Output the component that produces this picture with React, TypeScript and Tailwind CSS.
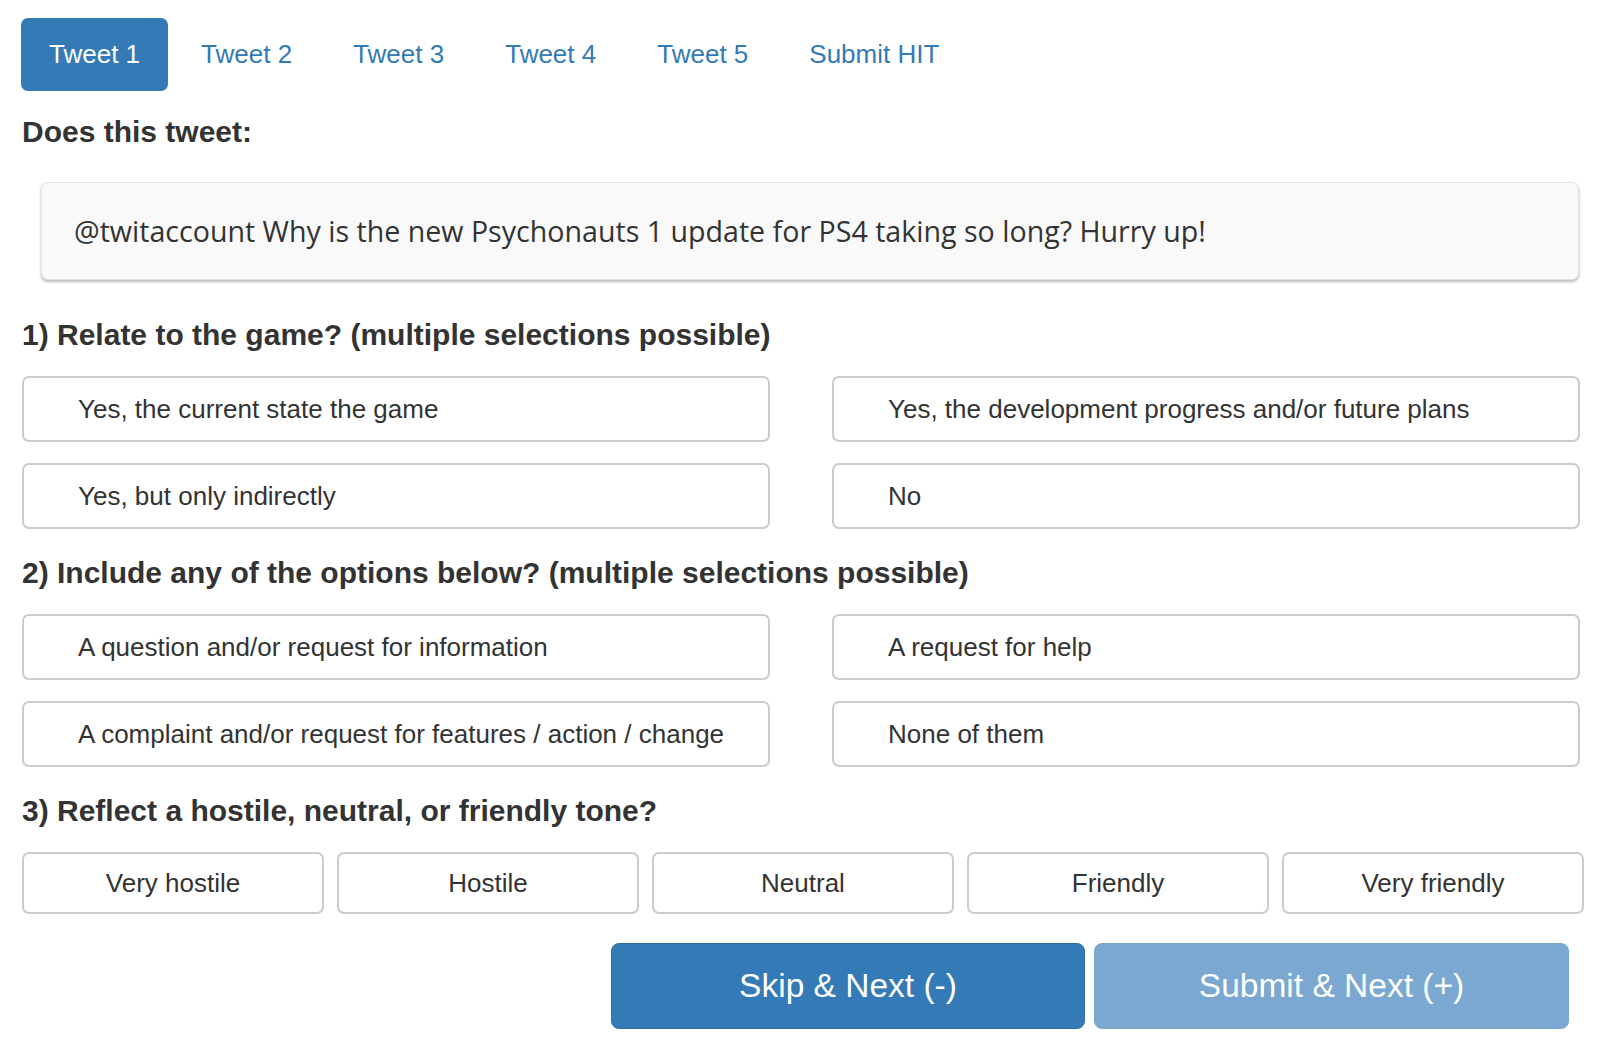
const tabs = ["Tweet 1", "Tweet 2", "Tweet 3", "Tweet 4", "Tweet 5", "Submit HIT"];

const q1 = [
  "Yes, the current state the game",
  "Yes, the development progress and/or future plans",
  "Yes, but only indirectly",
  "No",
];

const q2 = [
  "A question and/or request for information",
  "A request for help",
  "A complaint and/or request for features / action / change",
  "None of them",
];

const tones = ["Very hostile", "Hostile", "Neutral", "Friendly", "Very friendly"];

const Option = ({ label }: { label: string }) => (
  <div className="h-[66px] flex items-center pl-[54px] border-2 border-[#cccccc] rounded-[7px] bg-white text-[26px]">
    {label}
  </div>
);

const Heading = ({ children, className }: { children: React.ReactNode; className?: string }) => (
  <h4 className={"text-[30px] leading-[36px] font-bold " + (className ?? "")}>{children}</h4>
);

export default function App() {
  return (
    <div className="min-h-screen bg-white pl-[22px] pt-[18px] font-['Liberation_Sans',Arial,sans-serif] text-[#333333]">
      {/* nav pills */}
      <ul className="flex gap-[5px] -ml-[1px]">
        {tabs.map((t, i) => (
          <li
            key={t}
            className={
              i === 0
                ? "px-[28px] py-[18px] leading-[37px] text-[26px] rounded-[7px] bg-[#337ab7] text-white"
                : "px-[28px] py-[18px] leading-[37px] text-[26px] rounded-[7px] text-[#337ab7]"
            }
          >
            {t}
          </li>
        ))}
      </ul>

      <Heading className="mt-[23px]">Does this tweet:</Heading>

      <div className="mt-[32px] ml-[19px] w-[1538px] h-[98px] flex items-center pl-[32px] bg-[#f9f9f9] border border-[#e3e3e3] rounded-[7px] shadow-[0_2px_3px_rgba(0,0,0,0.28)] font-['Open_Sans',sans-serif] text-[28.6px] text-[#333333]">
        @twitaccount Why is the new Psychonauts 1 update for PS4 taking so long? Hurry up!
      </div>

      <Heading className="mt-[37px]">1) Relate to the game? (multiple selections possible)</Heading>
      <div className="mt-[23px] w-[1558px] grid grid-cols-2 gap-x-[62px] gap-y-[21px]">
        {q1.map((o) => (
          <Option key={o} label={o} />
        ))}
      </div>

      <Heading className="mt-[26px]">2) Include any of the options below? (multiple selections possible)</Heading>
      <div className="mt-[23px] w-[1558px] grid grid-cols-2 gap-x-[62px] gap-y-[21px]">
        {q2.map((o) => (
          <Option key={o} label={o} />
        ))}
      </div>

      <Heading className="mt-[26px]">3) Reflect a hostile, neutral, or friendly tone?</Heading>
      <div className="mt-[23px] w-[1562px] grid grid-cols-5 gap-x-[13px]">
        {tones.map((t) => (
          <div
            key={t}
            className="h-[62px] flex items-center justify-center border-2 border-[#cccccc] rounded-[7px] bg-white text-[26px]"
          >
            {t}
          </div>
        ))}
      </div>

      <div className="mt-[29px] ml-[589px] flex gap-[9px]">
        <button className="w-[474px] h-[86px] rounded-[8px] bg-[#337ab7] border border-[#2e6da4] text-white text-[33.5px]">
          Skip &amp; Next (-)
        </button>
        <button className="w-[475px] h-[86px] rounded-[8px] bg-[#7aa8d0] border border-[#7aa7cf] text-white text-[33.5px]">
          Submit &amp; Next (+)
        </button>
      </div>
    </div>
  );
}
